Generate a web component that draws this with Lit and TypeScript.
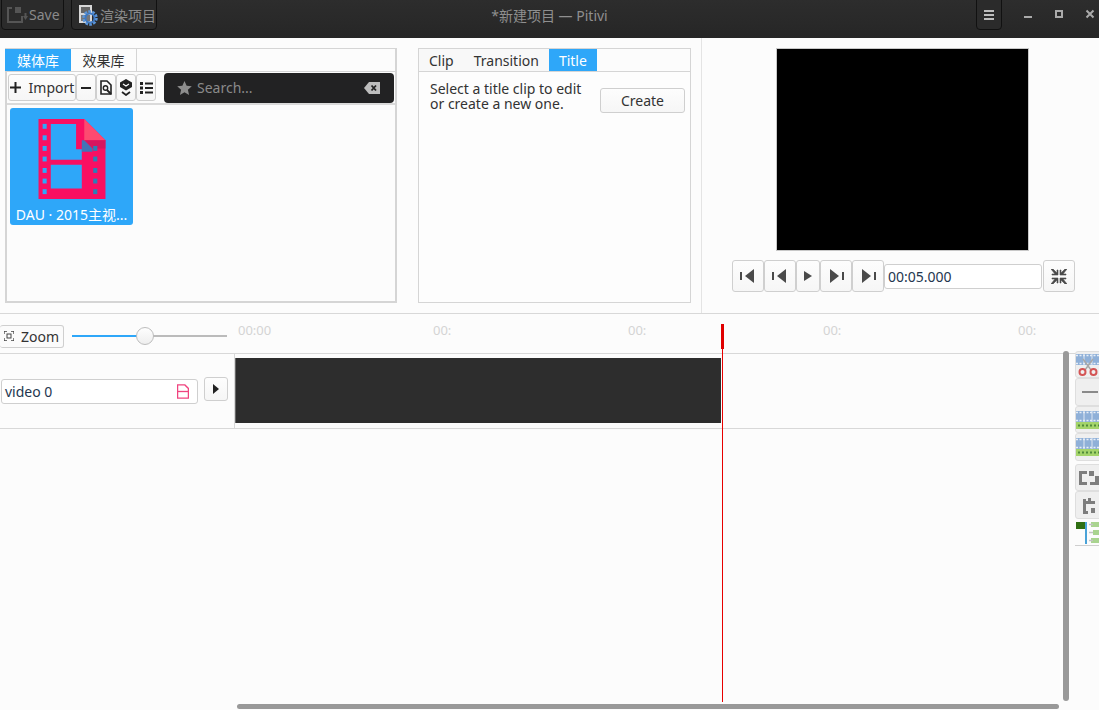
import { LitElement, css, html, svg } from 'lit';
import { customElement } from 'lit/decorators.js';

const filmIcon = svg`
  <path d="M0 0H56L82 26V98H0Z" fill="#f90f62"/>
  <path d="M15 6H46V37H53V50H15ZM15 56H53V85H15Z" fill="#2ea7f9" transform="translate(0 0)"/>
  <path d="M56 0V26H82Z" fill="#fd4a70"/>
  <path d="M56 26H82V36H66Z" fill="#c9185f" opacity=".75"/>
  <path d="M53 26H56L66 36V40H53Z" fill="#2d7ec0" opacity=".9"/>
  ${[6, 20, 33, 46, 60, 73, 86].map(
    (y) => svg`<rect x="5" y="${y}" width="5" height="6" fill="#2ea7f9"/>`,
  )}
  ${[33, 46, 60, 73, 86].map(
    (y) => svg`<rect x="61" y="${y}" width="5" height="6" fill="#2b7fb8" transform="translate(6 0)"/>`,
  )}
`;

@customElement('app-root')
export class AppRoot extends LitElement {
  private skipIcon(flip: boolean, w: number) {
    return html`<svg class=${flip ? 'flip' : ''} width=${w} height="14" viewBox="0 0 16 14">
      <rect x="0" y="3" width="2" height="8" fill="#4a4a4a"/>
      <path d="M5 7L14 0V14Z" fill="#4a4a4a"/>
    </svg>`;
  }

  private renderTitlebar() {
    return html`<header class="titlebar">
      <button class="dark save">
        <svg width="28" height="22" viewBox="0 0 28 22">
          <path d="M5 3H10V5H7V17H19V12H21V19H5Z" fill="#555"/>
          <rect x="13" y="3" width="6" height="6" fill="#555"/>
          <path d="M21 12H26L23.500 16Z M22.500 9H24.500V12H22.500Z" fill="#555"/>
        </svg>
        <span>Save</span>
      </button>
      <button class="dark render">
        <svg width="22" height="24" viewBox="0 0 22 24">
          <rect x="2" y="2" width="13" height="18" fill="#d8d8d8"/>
          <rect x="4" y="4" width="9" height="6" fill="#666"/>
          <rect x="4" y="12" width="9" height="6" fill="#777"/>
          <circle cx="13" cy="15" r="6" fill="none" stroke="#5b95d8" stroke-width="3.500" stroke-dasharray="2.500 1.200"/>
          <circle cx="13" cy="15" r="4.500" fill="none" stroke="#3f78c0" stroke-width="2"/>
        </svg>
        <span>渲染项目</span>
      </button>
      <div class="title">*新建项目 — Pitivi</div>
      <button class="dark menu">
        <svg width="10" height="10" viewBox="0 0 10 10">
          <path d="M0 0H10V2H0ZM0 4H10V6H0ZM0 8H10V10H0Z" fill="#bdbdbd"/>
        </svg>
      </button>
      <div class="wm">
        <svg width="10" height="10" viewBox="0 0 10 10"><rect x="1" y="7" width="8" height="2" fill="#aaa"/></svg>
        <svg width="10" height="10" viewBox="0 0 10 10"><path d="M1 1H9V9H1ZM3 3V7H7V3Z" fill="#aaa" fill-rule="evenodd"/></svg>
        <svg width="10" height="10" viewBox="0 0 10 10"><path d="M1.500 1.500L8.500 8.500M8.500 1.500L1.500 8.500" stroke="#aaa" stroke-width="2"/></svg>
      </div>
    </header>`;
  }

  private renderLibrary() {
    return html`<section class="panel library">
      <div class="frame">
        <div class="tabs">
          <div class="tab active wide">媒体库</div>
          <div class="tab boxed wide">效果库</div>
        </div>
        <div class="toolbar">
          <button class="tool import">
            <svg width="11" height="11" viewBox="0 0 11 11"><path d="M4.500 0H6.500V4.500H11V6.500H6.500V11H4.500V6.500H0V4.500H4.500Z" fill="#222"/></svg>
            <span>Import</span>
          </button>
          <button class="tool small"><svg width="10" height="2" viewBox="0 0 10 2"><rect width="10" height="2" fill="#222"/></svg></button>
          <button class="tool small">
            <svg width="12" height="15" viewBox="0 0 12 15">
              <path d="M1 1H7L11 5V14H1Z" fill="none" stroke="#222" stroke-width="1.600"/>
              <circle cx="5.500" cy="8" r="2.200" fill="none" stroke="#222" stroke-width="1.400"/>
              <path d="M7 10L11 14" stroke="#222" stroke-width="2"/>
            </svg>
          </button>
          <button class="tool small">
            <svg width="12" height="17" viewBox="0 0 12 17">
              <path d="M6 0L12 3.500V8L6 11.500L0 8V3.500Z" fill="#222"/>
              <path d="M3 5L6 7L9 5" stroke="#fff" fill="none" stroke-width="1.200"/>
              <path d="M2 13L6 16L10 13" stroke="#222" fill="none" stroke-width="1.800"/>
            </svg>
          </button>
          <button class="tool small">
            <svg width="13" height="12" viewBox="0 0 13 12">
              <path d="M0 0H3V3H0ZM5 .500H13V2.500H5ZM0 4.500H3V7.500H0ZM5 5H13V7H5ZM0 9H3V12H0ZM5 9.500H13V11.500H5Z" fill="#222"/>
            </svg>
          </button>
          <div class="search">
            <svg width="15" height="14" viewBox="0 0 24 23"><path d="M12 0L15.500 8L24 8.800L17.600 14.400L19.500 23L12 18.500L4.500 23L6.400 14.400L0 8.800L8.500 8Z" fill="#8d8d8d"/></svg>
            <span class="placeholder">Search...</span>
            <svg class="clear" width="16" height="12" viewBox="0 0 16 12">
              <path d="M5 0H16V12H5L0 6Z" fill="#bdbdbd"/>
              <path d="M7.500 3.500L12 8.500M12 3.500L7.500 8.500" stroke="#222" stroke-width="1.800"/>
            </svg>
          </div>
        </div>
        <div class="assets">
          <div class="asset">
            <svg width="68" height="80" viewBox="0 0 82 98">${filmIcon}</svg>
            <div class="asset-name">DAU · 2015主视...</div>
          </div>
        </div>
      </div>
    </section>`;
  }

  private renderTitlePanel() {
    return html`<section class="panel clip">
      <div class="frame">
        <div class="tabs">
          <div class="tab plain">Clip</div>
          <div class="tab plain">Transition</div>
          <div class="tab active">Title</div>
        </div>
        <div class="clip-body">
          <p>Select a title clip to edit<br />or create a new one.</p>
          <button class="tool create">Create</button>
        </div>
      </div>
    </section>`;
  }

  private renderViewer() {
    return html`<section class="panel viewer">
      <div class="screen"></div>
      <div class="transport">
        <button class="tool tp w32">${this.skipIcon(false, 16)}</button>
        <button class="tool tp w32">${this.skipIcon(false, 16)}</button>
        <button class="tool tp w24">
          <svg width="8" height="10" viewBox="0 0 8 10"><path d="M0 0L8 5L0 10Z" fill="#4a4a4a"/></svg>
        </button>
        <button class="tool tp w32">${this.skipIcon(true, 16)}</button>
        <button class="tool tp w32">${this.skipIcon(true, 16)}</button>
        <div class="timecode">00:05.000</div>
        <button class="tool tp w32 shrink">
          <svg width="16" height="15" viewBox="0 0 16 15">
            <path d="M0 0L2 0L6 4V1H7V6H1V5H4ZM16 0H14L10 4V1H9V6H15V5H12ZM0 15H2L6 11V14H7V9H1V10H4ZM16 15H14L10 11V14H9V9H15V10H12Z" fill="#4a4a4a" stroke="#4a4a4a" stroke-width=".6"/>
          </svg>
        </button>
      </div>
    </section>`;
  }

  private renderSideTools() {
    const strip = svg`
      <rect width="24" height="11" fill="#8fb0d8"/>
      <path d="M0 1.500H24M0 9.500H24" stroke="#e8eef6" stroke-width="1.500" stroke-dasharray="2 1.500"/>
      <path d="M8 0V11M16 0V11" stroke="#dde6f2" stroke-width="1"/>
    `;
    const green = svg`
      <g transform="translate(0 3)">${strip}</g>
      <rect y="14" width="24" height="7" fill="#a4d46a"/>
      <path d="M2 17.500H24" stroke="#4f8a3a" stroke-width="2" stroke-dasharray="2 2"/>
    `;
    return html`<aside class="side">
      <button class="side-btn h27">
        <svg width="24" height="24" viewBox="0 0 24 24">
          <g transform="translate(0 1)">${strip}</g>
          <path d="M7 6L15 17M17 6L9 17" stroke="#a8a8a8" stroke-width="1.500"/>
          <circle cx="6.500" cy="19" r="3" fill="none" stroke="#d45555" stroke-width="2"/>
          <circle cx="17.500" cy="19" r="3" fill="none" stroke="#d45555" stroke-width="2"/>
        </svg>
      </button>
      <button class="side-btn h28">
        <svg width="24" height="4" viewBox="0 0 24 4"><rect x="6" y="1" width="16" height="2" fill="#8a8a8a"/></svg>
      </button>
      <button class="side-btn h27"><svg width="24" height="24" viewBox="0 0 24 24">${green}</svg></button>
      <button class="side-btn h28"><svg width="24" height="24" viewBox="0 0 24 24">${green}</svg></button>
      <button class="side-btn h27 gap3">
        <svg width="24" height="20" viewBox="0 0 24 20">
          <path d="M3 3H11V6H6V14H11V17H3Z" fill="#7d7d7d"/>
          <rect x="13" y="3" width="5" height="5" fill="#7d7d7d"/>
          <path d="M14 14H19V8H23V17H14Z" fill="#7d7d7d"/>
        </svg>
      </button>
      <button class="side-btn h28">
        <svg width="24" height="20" viewBox="0 0 24 20">
          <path d="M7 4H10V6H12V3H15V6H19V9H10V16H12V19H7Z" fill="#7d7d7d"/>
          <rect x="15" y="13" width="4" height="5" fill="#7d7d7d"/>
        </svg>
      </button>
      <div class="align-tool">
        <svg width="24" height="22" viewBox="0 0 24 22">
          <rect x="1" y="0" width="10" height="7" fill="#2f6f12"/>
          <rect x="10" y="0" width="2" height="22" fill="#4aa3d8"/>
          <rect x="16" y="0" width="8" height="5" fill="#a9d48f"/>
          <rect x="18" y="8" width="6" height="5" fill="#a9d48f"/>
          <rect x="16" y="16" width="8" height="5" fill="#a9d48f"/>
          <path d="M14 2.500H18M14 10.500H18M14 18.500H18" stroke="#c2c2c2" stroke-width="1.500"/>
        </svg>
      </div>
    </aside>`;
  }

  private renderTimeline() {
    return html`<section class="timeline">
      <div class="ruler-row">
        <div class="zoom-cell">
          <button class="tool zoom">
            <svg width="10" height="10" viewBox="0 0 10 10">
              <path d="M0 3V0H3M7 0H10V3M10 7V10H7M3 10H0V7" fill="none" stroke="#444" stroke-width="1.300"/>
              <rect x="3" y="3" width="4" height="4" fill="none" stroke="#444"/>
            </svg>
            <span>Zoom</span>
          </button>
          <div class="slider">
            <div class="fill"></div>
            <div class="thumb"></div>
            <div class="rest"></div>
          </div>
        </div>
        <div class="ruler">
          <span class="first">00:00</span><span>00:</span><span>00:</span><span>00:</span><span>00:</span>
        </div>
      </div>
      <div class="tracks">
        <div class="track-area">
          <div class="track">
            <div class="track-head">
              <div class="track-name">
                <span>video 0</span>
                <svg width="12" height="15" viewBox="0 0 82 98">
                  <path d="M4 4H54L78 28V94H4Z" fill="none" stroke="#f0447f" stroke-width="9"/>
                  <path d="M4 49H78" stroke="#f0447f" stroke-width="9"/>
                </svg>
              </div>
              <button class="tool expand">
                <svg width="6" height="10" viewBox="0 0 6 10"><path d="M0 0L6 5L0 10Z" fill="#222"/></svg>
              </button>
            </div>
            <div class="track-lane"><div class="clip-bar"></div></div>
          </div>
          <div class="empty"></div>
          <div class="h-scroll"><div class="h-thumb"></div></div>
        </div>
        <div class="v-scroll"><div class="v-thumb"></div></div>
        ${this.renderSideTools()}
      </div>
      <div class="playhead-cap"></div>
      <div class="playhead-line"></div>
    </section>`;
  }

  render() {
    return html`
      ${this.renderTitlebar()}
      <div class="top">
        ${this.renderLibrary()} ${this.renderTitlePanel()} ${this.renderViewer()}
      </div>
      ${this.renderTimeline()}
    `;
  }

  static styles = css`
    :host {
      display: flex;
      flex-direction: column;
      width: 1099px;
      height: 710px;
      overflow: hidden;
      background: #fcfcfc;
      font-family: 'Noto Sans', 'Noto Sans CJK SC', sans-serif;
      font-size: 14px;
      color: #333;
    }

    button {
      font: inherit;
      color: inherit;
      padding: 0;
      margin: 0;
    }

    .titlebar {
      position: relative;
      flex: none;
      display: flex;
      align-items: flex-start;
      height: 38px;
      box-sizing: border-box;
      padding-left: 1px;
      background: linear-gradient(#2d2d2d, #262626);
    }

    .dark {
      display: flex;
      align-items: center;
      height: 31px;
      margin-top: -1px;
      box-sizing: border-box;
      background: #2b2b2b;
      border: 1px solid #111;
      border-radius: 0 0 4px 4px;
      color: #8a8a8a;
    }

    .save {
      width: 63px;
      padding-left: 0;
    }

    .save span {
      margin-left: -1px;
    }

    .render {
      width: 86px;
      margin-left: 7px;
      padding-left: 5px;
    }

    .render span {
      margin-left: 1px;
    }

    .title {
      position: absolute;
      left: 0;
      right: 0;
      top: 5px;
      text-align: center;
      color: #8f8f8f;
      pointer-events: none;
    }

    .menu {
      position: relative;
      justify-content: center;
      width: 26px;
      margin-left: 819px;
    }

    .wm {
      position: relative;
      display: flex;
      gap: 21px;
      margin: 9px 0 0 21px;
    }

    .top {
      flex: none;
      display: flex;
      height: 275px;
      border-bottom: 1px solid #d8d8d8;
      box-sizing: content-box;
    }

    .panel {
      box-sizing: border-box;
      height: 100%;
    }

    .library {
      width: 407px;
      padding: 10px 10px 10px 5px;
    }

    .clip {
      width: 294px;
      padding: 10px 10px 10px 11px;
    }

    .viewer {
      flex: 1;
      border-left: 1px solid #e4e4e4;
      display: flex;
      flex-direction: column;
      align-items: flex-start;
      padding: 10px 0 0 30px;
    }

    .frame {
      height: 100%;
      box-sizing: border-box;
      display: flex;
      flex-direction: column;
      border: 2px solid #d5d5d5;
      border-top: 1px solid #d5d5d5;
      border-left: 2px solid #d5d5d5;
    }

    .clip .frame {
      border-width: 1px;
    }

    .library .frame {
      margin-left: 0;
    }

    .tabs {
      flex: none;
      display: flex;
      height: 22px;
      margin-left: -2px;
      border-bottom: 1px solid #d5d5d5;
    }

    .clip .tabs {
      margin-left: 0;
    }

    .tab {
      display: flex;
      align-items: center;
      justify-content: center;
      padding: 0 10px;
      color: #333;
    }

    .tab.wide {
      box-sizing: border-box;
      width: 66px;
      padding: 0;
    }

    .tab.active {
      background: #2ea7f9;
      color: #fff;
    }

    .tab.boxed {
      background: #fcfcfc;
      border-right: 1px solid #d5d5d5;
    }

    .tab.plain {
      background: #f8f8f8;
    }

    .toolbar {
      flex: none;
      display: flex;
      align-items: center;
      height: 33px;
      box-sizing: border-box;
      padding-left: 1px;
      border-bottom: 2px solid #dadada;
    }

    .tool {
      display: flex;
      align-items: center;
      justify-content: center;
      box-sizing: border-box;
      background: linear-gradient(#fdfdfd, #f6f6f6);
      border: 1px solid #cfcfcf;
      border-radius: 3px;
    }

    .import {
      width: 68px;
      height: 27px;
      gap: 8px;
      font-size: 14px;
      white-space: nowrap;
    }

    .small {
      width: 20px;
      height: 27px;
    }

    .toolbar .small:nth-child(2) {
      width: 20px;
      margin-left: 0;
    }

    .search {
      display: flex;
      align-items: center;
      flex: 1;
      height: 30px;
      box-sizing: border-box;
      margin: 0 1px 0 8px;
      padding: 0 14px 0 13px;
      background: #222223;
      border-radius: 4px;
      color: #8a8a8a;
    }

    .placeholder {
      margin-left: 5px;
    }

    .clear {
      margin-left: auto;
    }

    .assets {
      flex: 1;
      padding: 3px 3px;
    }

    .asset {
      display: flex;
      flex-direction: column;
      align-items: center;
      width: 123px;
      height: 117px;
      box-sizing: border-box;
      padding-top: 11px;
      background: #2ea7f9;
      border-radius: 3px;
      color: #fff;
    }

    .asset-name {
      margin-top: 5px;
      white-space: nowrap;
    }

    .clip-body {
      flex: 1;
      display: flex;
      align-items: flex-start;
      background: #fdfdfd;
      padding: 9px 5px 0 11px;
    }

    .clip-body p {
      flex: 1;
      margin: 0;
      line-height: 15px;
    }

    .create {
      width: 85px;
      height: 25px;
      margin-top: 7px;
    }

    .screen {
      flex: none;
      width: 253px;
      height: 203px;
      margin-left: 44px;
      box-sizing: border-box;
      background: #000;
      border: 1px solid #c8c8c8;
    }

    .transport {
      display: flex;
      align-items: center;
      margin-top: 9px;
    }

    .tp {
      height: 32px;
    }

    .w32 {
      width: 32px;
    }

    .w24 {
      width: 24px;
    }

    .flip {
      transform: scaleX(-1);
    }

    .timecode {
      box-sizing: border-box;
      width: 158px;
      height: 25px;
      padding-left: 3px;
      line-height: 23px;
      background: #fff;
      border: 1px solid #cfcfcf;
      border-radius: 3px;
      color: #24364f;
    }

    .shrink {
      margin-left: 1px;
    }

    .timeline {
      position: relative;
      flex: 1;
      display: flex;
      flex-direction: column;
      min-height: 0;
    }

    .ruler-row {
      flex: none;
      display: flex;
      height: 39px;
      border-bottom: 1px solid #d8d8d8;
      box-sizing: content-box;
    }

    .zoom-cell {
      flex: none;
      display: flex;
      align-items: center;
      width: 235px;
      padding-top: 5px;
      box-sizing: border-box;
    }

    .zoom {
      width: 64px;
      height: 23px;
      gap: 7px;
      border-left: none;
      white-space: nowrap;
      background: #fbfbfb;
    }

    .slider {
      position: relative;
      display: flex;
      align-items: center;
      width: 155px;
      margin-left: 8px;
    }

    .fill {
      width: 73px;
      height: 2px;
      background: #2ea7f9;
    }

    .rest {
      flex: 1;
      height: 2px;
      background: #bbb;
    }

    .thumb {
      flex: none;
      width: 18px;
      height: 18px;
      box-sizing: border-box;
      margin: 0 -4px 0 -9px;
      z-index: 1;
      background: linear-gradient(#fefefe, #eeeeee);
      border: 1px solid #bdbdbd;
      border-radius: 50%;
    }

    .ruler {
      flex: 1;
      display: flex;
      padding: 6px 0 0 3px;
      font-size: 13px;
      color: #d4d4d4;
      overflow: hidden;
    }

    .ruler span {
      flex: none;
      width: 195px;
      line-height: 20px;
    }

    .tracks {
      flex: 1;
      min-height: 0;
      display: flex;
    }

    .track-area {
      flex: none;
      width: 1061px;
      display: flex;
      flex-direction: column;
    }

    .track {
      flex: none;
      display: flex;
      height: 74px;
      border-bottom: 1px solid #d8d8d8;
    }

    .track-head {
      flex: none;
      width: 234px;
      display: flex;
      align-items: center;
      padding-left: 1px;
      box-sizing: border-box;
    }

    .track-name {
      display: flex;
      align-items: center;
      justify-content: space-between;
      width: 197px;
      height: 25px;
      box-sizing: border-box;
      padding: 0 8px 0 3px;
      background: #fff;
      border: 1px solid #cfcfcf;
      border-radius: 3px;
      color: #24364f;
    }

    .expand {
      width: 24px;
      height: 24px;
      margin: -4px 0 0 6px;
    }

    .track-lane {
      flex: 1;
      padding-top: 4px;
      border-left: 1px solid #d8d8d8;
    }

    .clip-bar {
      width: 486px;
      height: 65px;
      background: #2d2d2d;
      border-left: 1px solid #666;
      box-sizing: border-box;
    }

    .empty {
      flex: 1;
    }

    .h-scroll {
      flex: none;
      height: 5px;
      margin-bottom: 1px;
      padding-left: 237px;
    }

    .h-thumb {
      width: 822px;
      height: 5px;
      background: #999;
      border-radius: 3px;
    }

    .v-scroll {
      flex: none;
      width: 14px;
      box-sizing: border-box;
      padding: 0 6px 9px 2px;
      margin-top: -3px;
    }

    .v-thumb {
      width: 6px;
      height: 100%;
      background: #999;
      border-radius: 3px;
    }

    .side {
      flex: none;
      width: 24px;
      margin-top: -3px;
      display: flex;
      flex-direction: column;
      align-items: flex-start;
    }

    .side-btn {
      display: flex;
      align-items: center;
      justify-content: flex-start;
      flex: none;
      width: 30px;
      box-sizing: border-box;
      background: #efefef;
      border: 1px solid #dedede;
      border-radius: 3px;
      overflow: hidden;
    }

    .h27 {
      height: 27px;
    }

    .h28 {
      height: 28px;
    }

    .gap3 {
      margin-top: 3px;
    }

    .align-tool {
      flex: none;
      width: 24px;
      height: 27px;
      padding-top: 3px;
      box-sizing: border-box;
      border-bottom: 1px solid #cfcfcf;
    }

    .playhead-cap {
      position: absolute;
      left: 721px;
      top: 10px;
      width: 3px;
      height: 25px;
      background: #e00000;
    }

    .playhead-line {
      position: absolute;
      left: 722px;
      top: 35px;
      width: 1px;
      height: 353px;
      background: #e80000;
    }
  `;
}
